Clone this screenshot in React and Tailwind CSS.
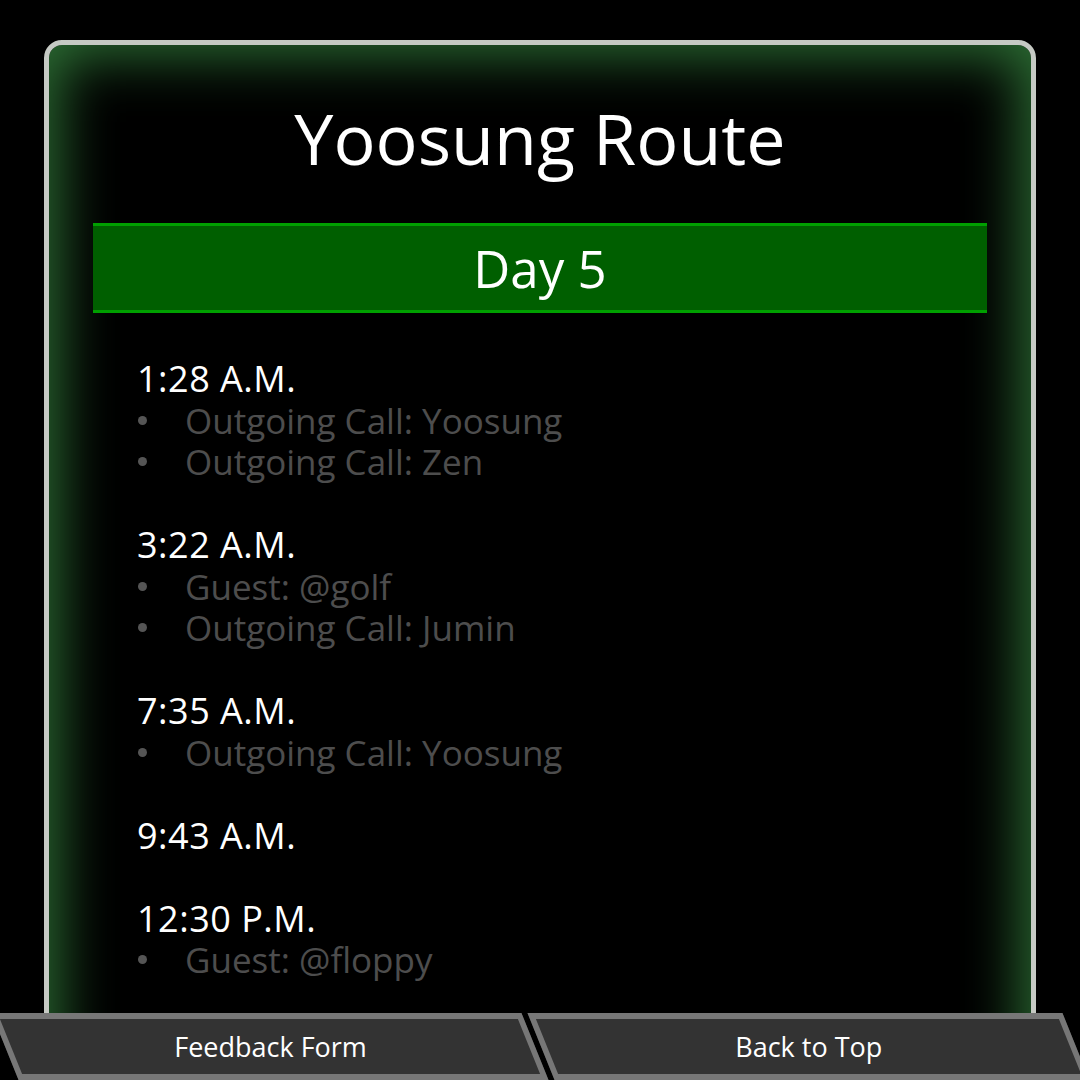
import React from "react";

const schedule = [
  { time: "1:28 A.M.", items: ["Outgoing Call: Yoosung", "Outgoing Call: Zen"] },
  { time: "3:22 A.M.", items: ["Guest: @golf", "Outgoing Call: Jumin"] },
  { time: "7:35 A.M.", items: ["Outgoing Call: Yoosung"] },
  { time: "9:43 A.M.", items: [] },
  { time: "12:30 P.M.", items: ["Guest: @floppy"] },
];

export default function App() {
  return (
    <div className="h-[1080px] w-[1080px] bg-black flex flex-col overflow-hidden font-['Open_Sans',sans-serif]">
      {/* Route card */}
      <div className="flex-1 overflow-hidden pt-[40px] px-[44px]">
        <div className="h-[1100px] rounded-[18px] border-[5px] border-[#c6cac4] bg-black shadow-[inset_0_0_55px_10px_#2d7035]">
          <h1 className="pt-[49px] text-center text-[70px] leading-[88px] text-white">Yoosung Route</h1>

          <div className="mx-[44px] mt-[41px] h-[90px] border-y-[3px] border-[#00a000] bg-[#005f00] flex items-center justify-center">
            <span className="text-[51px] text-white">Day 5</span>
          </div>

          <div className="px-[88px] pt-[45px]">
            {schedule.map((s) => (
              <div key={s.time} className="mb-[41.5px]">
                <div className="text-[36px] leading-[41.5px] tracking-[0.5px] text-white">{s.time}</div>
                {s.items.map((it) => (
                  <div key={it} className="flex items-center text-[35px] leading-[41.5px] text-[#4d4d4d]">
                    <span className="w-[48px] flex">
                      <span className="ml-[1px] h-[9px] w-[9px] rounded-full bg-[#555]" />
                    </span>
                    {it}
                  </div>
                ))}
              </div>
            ))}
          </div>
        </div>
      </div>

      {/* Bottom nav */}
      <div className="h-[67px] shrink-0 flex gap-[6px] bg-black">
        <button className="ml-[5px] w-[530px] shrink-0 skew-x-[22deg] border-[6px] border-[#777] bg-[#333] text-white flex items-center justify-center">
          <span className="block -skew-x-[22deg] text-[27px] leading-[36px]">Feedback Form</span>
        </button>
        <button className="w-[535px] shrink-0 skew-x-[22deg] border-[6px] border-[#777] bg-[#333] text-white flex items-center justify-center">
          <span className="block -skew-x-[22deg] text-[27px] leading-[36px]">Back to Top</span>
        </button>
      </div>
    </div>
  );
}
